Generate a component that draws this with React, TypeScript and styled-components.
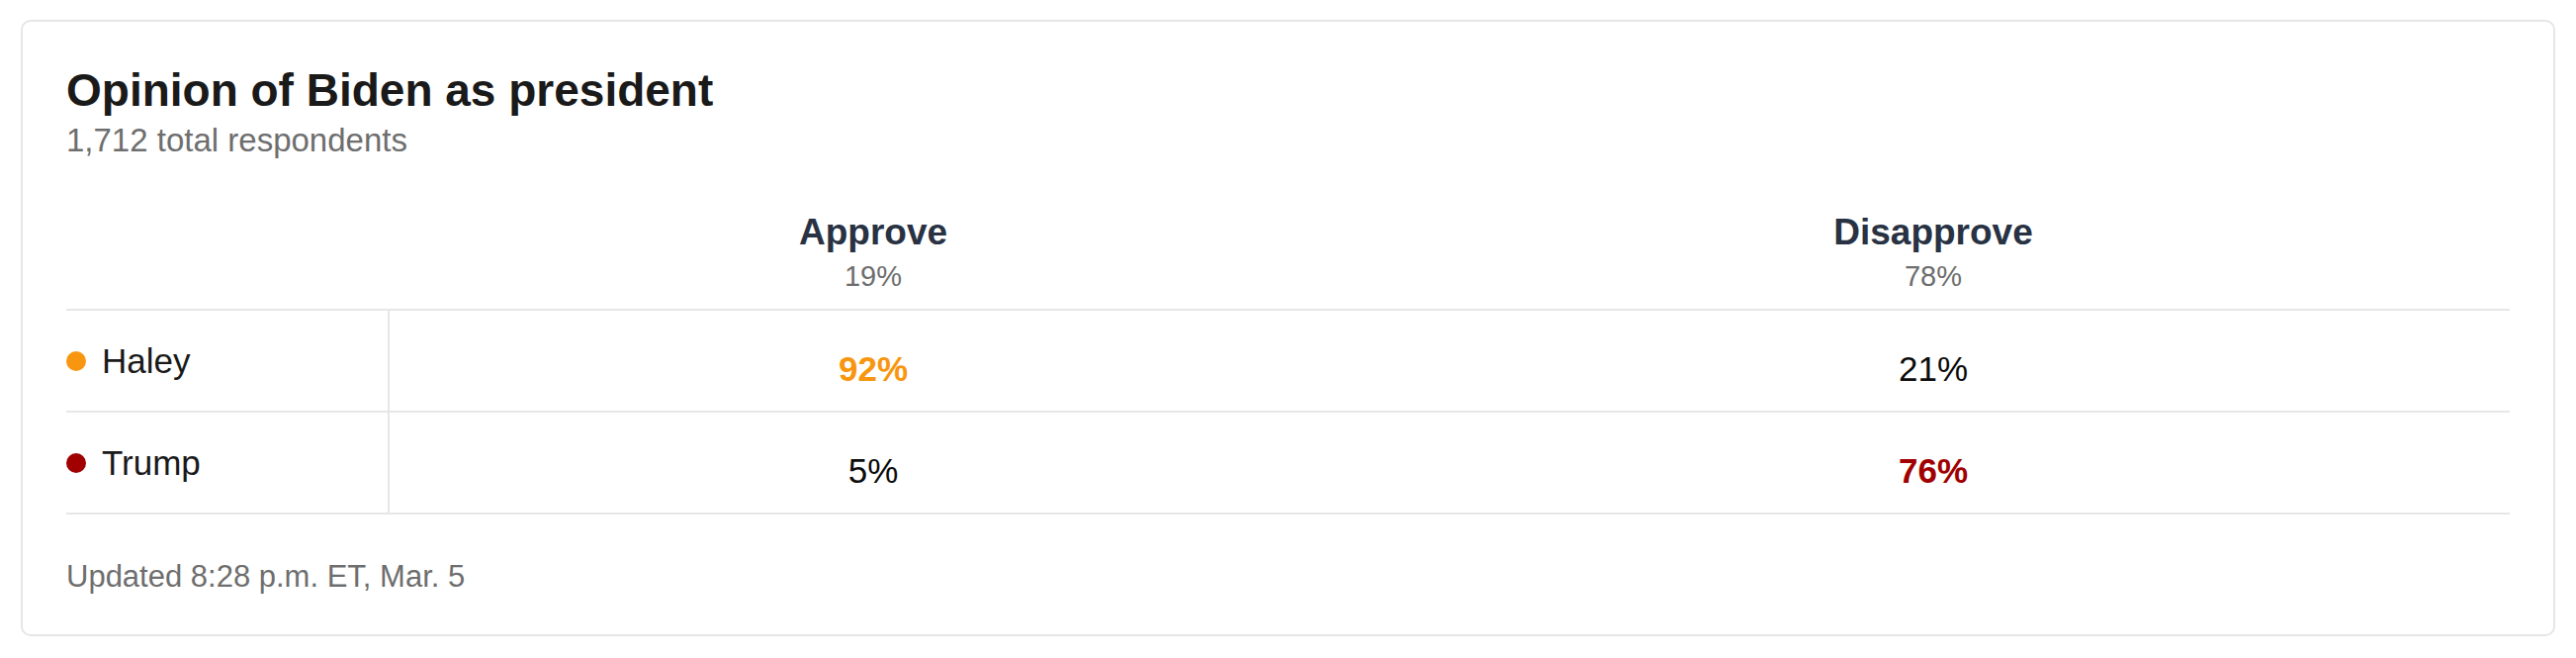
import React from 'react'
import styled, { createGlobalStyle } from 'styled-components'

const GlobalStyle = createGlobalStyle`
	html, body {
		margin: 0;
		padding: 0;
		background: #fff;
	}
	body {
		font-family: 'Liberation Sans', Arial, sans-serif;
		color: #0c0c0c;
	}
`

const Page = styled.div`
	padding: 20px 21px;
`

const Card = styled.section`
	border: 2px solid #e6e6e6;
	border-radius: 10px;
	padding: 43px 44px 41px;
	background: #fff;
`

const Title = styled.h2`
	margin: 0;
	font-size: 46px;
	line-height: 52px;
	font-weight: 700;
	color: #1a1a1a;
`

const Subtitle = styled.p`
	margin: 7px 0 0;
	font-size: 33px;
	line-height: 36px;
	color: #6e6e6e;
`

const Table = styled.div`
	margin-top: 54px;
	display: grid;
	grid-template-columns: 327px 1fr 1fr;
`

const HeadCell = styled.div`
	display: flex;
	flex-direction: column;
	align-items: center;
	padding: 0 94px 16px 0;
	border-bottom: 2px solid #e6e6e6;
`

const HeadLabel = styled.span`
	font-size: 37px;
	line-height: 42px;
	font-weight: 700;
	color: #283243;
`

const HeadShare = styled.span`
	margin-top: 6px;
	font-size: 29px;
	line-height: 34px;
	color: #6e6e6e;
`

const NameCell = styled.div`
	display: flex;
	align-items: flex-start;
	height: 103px;
	box-sizing: border-box;
	border-right: 2px solid #e6e6e6;
	border-bottom: 2px solid #e6e6e6;
`

const Name = styled.div`
	display: flex;
	align-items: center;
	gap: 16px;
	margin-top: 31px;
	font-size: 35px;
	line-height: 40px;
	color: #1a1a1a;
`

const Dot = styled.span<{ $color: string }>`
	width: 20px;
	height: 20px;
	border-radius: 50%;
	background: ${p => p.$color};
	flex-shrink: 0;
`

const ValueCell = styled.div<{ $color?: string }>`
	height: 103px;
	padding: 39px 94px 0 0;
	box-sizing: border-box;
	border-bottom: 2px solid #e6e6e6;
	text-align: center;
	font-size: 35px;
	line-height: 40px;
	font-weight: ${p => (p.$color ? 700 : 400)};
	color: ${p => p.$color || '#0c0c0c'};
`

const Footer = styled.p`
	margin: 45px 0 0;
	font-size: 31px;
	line-height: 35px;
	color: #6e6e6e;
`

const options = [
	{ label: 'Approve', share: '19%' },
	{ label: 'Disapprove', share: '78%' },
]

const candidates = [
	{ name: 'Haley', color: '#f8960f', values: ['92%', '21%'], lead: 0 },
	{ name: 'Trump', color: '#a00000', values: ['5%', '76%'], lead: 1 },
]

export default function App() {
	return (
		<>
			<GlobalStyle />
			<Page>
				<Card>
					<Title>Opinion of Biden as president</Title>
					<Subtitle>1,712 total respondents</Subtitle>
					<Table>
						<HeadCell />
						{options.map(o => (
							<HeadCell key={o.label}>
								<HeadLabel>{o.label}</HeadLabel>
								<HeadShare>{o.share}</HeadShare>
							</HeadCell>
						))}
						{candidates.map(c => (
							<React.Fragment key={c.name}>
								<NameCell>
									<Name>
										<Dot $color={c.color} />
										{c.name}
									</Name>
								</NameCell>
								{c.values.map((v, i) => (
									<ValueCell key={i} $color={i === c.lead ? c.color : undefined}>
										{v}
									</ValueCell>
								))}
							</React.Fragment>
						))}
					</Table>
					<Footer>Updated 8:28 p.m. ET, Mar. 5</Footer>
				</Card>
			</Page>
		</>
	)
}
